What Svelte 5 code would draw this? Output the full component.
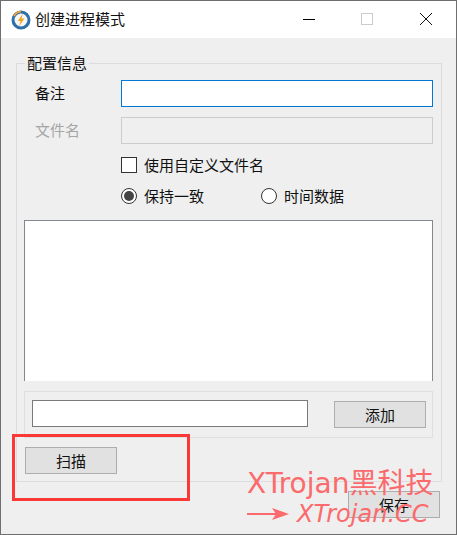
<script>
  let note = $state('');
</script>

<div class="window">
  <header class="titlebar">
    <svg class="logo" viewBox="0 0 20 20" width="20" height="20" aria-hidden="true">
      <circle cx="10" cy="10" r="8" fill="#f4f6f8" stroke="#2f6fa8" stroke-width="3"/>
      <path d="M3 6 A8.5 8.5 0 0 1 10 1.5" fill="none" stroke="#e8a33d" stroke-width="2"/>
      <path d="M11.8 3.8 L6.8 11 L9.6 11 L8 16.4 L13.4 8.6 L10.6 8.6 Z" fill="#f2a51f"/>
    </svg>
    <span class="title">创建进程模式</span>
    <div class="controls">
      <svg viewBox="0 0 12 12" width="12" height="12" class="min" aria-hidden="true"><path d="M0 6.5H12" stroke="#000" stroke-width="1"/></svg>
      <svg viewBox="0 0 12 12" width="12" height="12" class="max" aria-hidden="true"><rect x=".5" y=".5" width="11" height="11" fill="none" stroke="#ccc"/></svg>
      <svg viewBox="0 0 12 12" width="12" height="12" class="close" aria-hidden="true"><path d="M0 0L12 12M12 0L0 12" stroke="#111" stroke-width="1"/></svg>
    </div>
  </header>

  <main class="content">
    <section class="group">
      <div class="legend">配置信息</div>

      <div class="row first">
        <span class="label">备注</span>
        <input class="field active" bind:value={note} />
      </div>
      <div class="row second">
        <span class="label muted">文件名</span>
        <input class="field disabled" disabled />
      </div>
      <div class="check-row">
        <span class="checkbox"></span>
        <span>使用自定义文件名</span>
      </div>
      <div class="radio-row">
        <span class="option"><span class="radio on"></span>保持一致</span>
        <span class="option second-option"><span class="radio"></span>时间数据</span>
      </div>

      <div class="listbox"></div>

      <div class="addbox">
        <input class="add-input" />
        <button class="btn add">添加</button>
      </div>

      <button class="btn scan">扫描</button>
    </section>

    <div class="footer">
      <button class="btn save">保存</button>
    </div>
  </main>

  <div class="highlight"></div>
  <div class="wm">
    <div class="wm1">XTrojan黑科技</div>
    <div class="wm2">
      <svg viewBox="0 0 42 14" width="42" height="14" aria-hidden="true">
        <path d="M0 7H32" stroke="#fb6a6c" stroke-width="2"/>
        <path d="M25 1L42 7L25 13L29 7Z" fill="#fb6a6c"/>
      </svg>
      <span>XTrojan.CC</span>
    </div>
  </div>
</div>

<style>
  :global(body) {
    margin: 0;
    background: #0f4f4c;
  }
  .window {
    position: relative;
    box-sizing: border-box;
    width: 457px;
    height: 535px;
    border: 1px solid #6f6f6f;
    background: #efefef;
    font-family: "Noto Sans CJK SC", "Noto Sans", sans-serif;
    font-size: 15px;
    line-height: 20px;
    color: #111;
    overflow: hidden;
  }
  .titlebar {
    height: 37px;
    background: #fff;
    display: flex;
    align-items: center;
    padding-left: 10px;
  }
  .logo {
    margin-right: 4px;
  }
  .title {
    flex: 1;
    margin-top: -1px;
  }
  .controls {
    display: flex;
    align-items: center;
    margin-right: 24px;
    margin-top: -1px;
  }
  .min { margin-right: 46px; }
  .max { margin-right: 47px; }

  .content {
    padding: 25px 15px 0 15px;
  }
  .group {
    box-sizing: border-box;
    height: 419px;
    border: 1px solid #dcdcdc;
    padding: 0 8px 0 7px;
    width: 426px;
  }
  .legend {
    width: fit-content;
    margin: -10px 0 0 1px;
    padding: 0 2px;
    background: #efefef;
    height: 18px;
    line-height: 18px;
  }
  .row {
    display: flex;
    align-items: center;
    height: 27px;
  }
  .row.first { margin-top: 8px; }
  .row.second { margin-top: 10px; }
  .label {
    width: 97px;
    padding-left: 11px;
    box-sizing: border-box;
    margin-top: -1px;
  }
  .muted { color: #a6a6a6; }
  .field {
    box-sizing: border-box;
    width: 312px;
    height: 27px;
    margin: 0;
    padding: 0 4px;
    outline: none;
    font: inherit;
  }
  .field.active {
    background: #fff;
    border: 1px solid #0078d7;
  }
  .field.disabled {
    background: #efefef;
    border: 1px solid #cccccc;
  }
  .check-row,
  .radio-row {
    display: flex;
    align-items: center;
    padding-left: 97px;
    height: 20px;
  }
  .check-row { margin-top: 11px; }
  .radio-row { margin-top: 11px; }
  .checkbox {
    box-sizing: border-box;
    width: 16px;
    height: 16px;
    background: #fff;
    border: 1px solid #333;
    margin-right: 7px;
  }
  .option {
    display: flex;
    align-items: center;
  }
  .second-option { margin-left: 57px; }
  .radio {
    box-sizing: border-box;
    width: 16px;
    height: 16px;
    border: 1px solid #333;
    border-radius: 50%;
    background: #fff;
    margin-right: 7px;
    display: flex;
    align-items: center;
    justify-content: center;
  }
  .radio.on::after {
    content: "";
    width: 10px;
    height: 10px;
    border-radius: 50%;
    background: #444;
  }
  .listbox {
    box-sizing: border-box;
    width: 409px;
    height: 161px;
    margin-top: 14px;
    background: #fff;
    border: 1px solid #828790;
    border-bottom: none;
  }
  .addbox {
    box-sizing: border-box;
    width: 409px;
    height: 47px;
    margin-top: 10px;
    border: 1px solid #dfdfdf;
    padding: 8px 7px 0 7px;
    display: flex;
    align-items: flex-start;
  }
  .add-input {
    box-sizing: border-box;
    width: 276px;
    height: 27px;
    flex: none;
    margin: 0;
    padding: 0 4px;
    background: #fff;
    border: 1px solid #7a7a7a;
    outline: none;
  }
  .btn {
    box-sizing: border-box;
    width: 92px;
    height: 27px;
    margin: 0;
    padding: 0;
    background: #e1e1e1;
    border: 1px solid #adadad;
    font: inherit;
    color: #111;
  }
  .add {
    margin: 1px 0 0 26px;
    flex: none;
  }
  .scan {
    display: block;
    margin: 9px 0 0 1px;
  }
  .footer {
    display: flex;
    justify-content: flex-end;
    margin-top: 9px;
    padding-right: 1px;
  }
  .highlight {
    position: absolute;
    left: 11px;
    top: 433px;
    width: 172px;
    height: 61px;
    border: 3px solid #f93838;
    pointer-events: none;
  }
  .wm {
    position: absolute;
    left: 246px;
    top: 466px;
    color: #fb6a6c;
    pointer-events: none;
    white-space: nowrap;
  }
  .wm1 {
    font-family: "DejaVu Sans", "Noto Sans CJK SC", sans-serif;
    font-size: 28px;
    line-height: 33px;
  }
  .wm2 {
    display: flex;
    align-items: center;
    gap: 8px;
    font-family: "DejaVu Sans", sans-serif;
    font-style: italic;
    font-size: 24px;
    line-height: 28px;
  }
</style>
